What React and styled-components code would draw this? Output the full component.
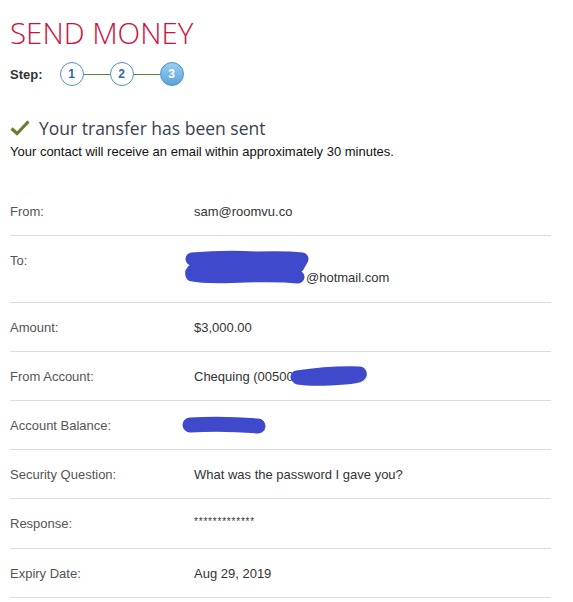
import React from "react";
import styled, { createGlobalStyle } from "styled-components";

const Global = createGlobalStyle`
  html, body { margin: 0; padding: 0; background: #fff; }
  body { font-family: "Liberation Sans", Arial, sans-serif; }
`;

const Page = styled.div`
  padding: 14px 0 0 10px;
  width: 541px;
`;

const Title = styled.h1`
  margin: 0;
  font-family: "Open Sans", sans-serif;
  font-weight: 300;
  font-size: 29.5px;
  line-height: 38px;
  color: #d0103a;
`;

const StepRow = styled.div`
  display: flex;
  align-items: center;
  margin-top: 9px;
  height: 26px;
`;

const StepLabel = styled.span`
  font-weight: 700;
  font-size: 13px;
  color: #333;
  margin-right: 17px;
`;

const Circle = styled.span`
  width: 22px;
  height: 22px;
  border-radius: 50%;
  border: 1.5px solid ${(p) => (p.$active ? "#4a8fc8" : "#4f8fc6")};
  display: flex;
  align-items: center;
  justify-content: center;
  font-weight: 700;
  font-size: 12px;
  color: ${(p) => (p.$active ? "#fff" : "#2a6cb0")};
  background: ${(p) =>
    p.$active ? "linear-gradient(#9bcdf0, #5aa5dc)" : "#fff"};
`;

const Connector = styled.span`
  width: 26px;
  height: 1px;
  background: #4f8a35;
`;

const SuccessHead = styled.div`
  display: flex;
  align-items: center;
  margin-top: 29px;
  gap: 9px;
`;

const SuccessText = styled.span`
  font-family: "Open Sans", sans-serif;
  font-size: 17.5px;
  color: #3b4150;
  line-height: 24px;
`;

const Sub = styled.p`
  margin: 3px 0 0;
  font-size: 13px;
  color: #111;
  line-height: 17px;
`;

const Table = styled.div`
  margin-top: 27px;
  display: flex;
  flex-direction: column;
`;

const Row = styled.div`
  display: grid;
  grid-template-columns: 184px 1fr;
  padding: 16px 0 ${(p) => (p.$tall ? 16 : 15)}px;
  border-bottom: 1px solid #dddddd;
  font-size: 13px;
  line-height: 17px;
`;

const Label = styled.div`
  color: #555;
`;

const Value = styled.div`
  color: #333;
  position: relative;
`;

const Hidden = styled.span`
  display: inline-block;
  width: ${(p) => p.$w}px;
`;

const Stars = styled.span`
  font-size: 10px;
  letter-spacing: 0.8px;
  position: relative;
  top: -3px;
`;

const Redact = styled.svg`
  position: absolute;
  overflow: visible;
  pointer-events: none;
`;

const Blob = ({ left, top, w, h, d, sw }) => (
  <Redact
    style={{ left, top }}
    width={w}
    height={h}
    viewBox={`0 0 ${w} ${h}`}
  >
    <path
      d={d}
      stroke="#3e49cb"
      strokeWidth={sw}
      strokeLinecap="round"
      strokeLinejoin="round"
      fill="none"
    />
  </Redact>
);

const Check = () => (
  <svg width="20" height="16" viewBox="0 0 20 16">
    <path
      d="M1.5 8.5 L7 13.5 L18.5 1.5"
      stroke="#6b7d31"
      strokeWidth="3.2"
      fill="none"
      strokeLinejoin="miter"
    />
  </svg>
);

export default function App() {
  return (
    <Page>
      <Global />
      <Title>SEND MONEY</Title>
      <StepRow>
        <StepLabel>Step:</StepLabel>
        <Circle>1</Circle>
        <Connector />
        <Circle>2</Circle>
        <Connector />
        <Circle $active>3</Circle>
      </StepRow>
      <SuccessHead>
        <Check />
        <SuccessText>Your transfer has been sent</SuccessText>
      </SuccessHead>
      <Sub>Your contact will receive an email within approximately 30 minutes.</Sub>
      <Table>
        <Row>
          <Label>From:</Label>
          <Value>sam@roomvu.co</Value>
        </Row>
        <Row $tall>
          <Label>To:</Label>
          <Value>
            <br />
            <Hidden $w={112} />
            @hotmail.com
            <Blob
              left={-8}
              top={1}
              w={124}
              h={36}
              d="M6 6 Q40 3 70 5 Q100 4 116 6 L112 13 Q60 12 20 14 Q4 16 6 22 Q20 25 60 23 Q95 22 112 24"
              sw={13}
            />
          </Value>
        </Row>
        <Row>
          <Label>Amount:</Label>
          <Value>$3,000.00</Value>
        </Row>
        <Row>
          <Label>From Account:</Label>
          <Value>
            Chequing (00500xxxxxxxx)
            <Blob
              left={96}
              top={-3}
              w={80}
              h={22}
              d="M7 12 Q40 7 70 8 Q74 13 40 14 Q20 15 8 13"
              sw={13}
            />
          </Value>
        </Row>
        <Row>
          <Label>Account Balance:</Label>
          <Value>
            <Blob
              left={-11}
              top={-2}
              w={84}
              h={22}
              d="M7 10 Q40 8 75 11"
              sw={15}
            />
          </Value>
        </Row>
        <Row>
          <Label>Security Question:</Label>
          <Value>What was the password I gave you?</Value>
        </Row>
        <Row>
          <Label>Response:</Label>
          <Value>
            <Stars>*************</Stars>
          </Value>
        </Row>
        <Row>
          <Label>Expiry Date:</Label>
          <Value>Aug 29, 2019</Value>
        </Row>
      </Table>
    </Page>
  );
}
